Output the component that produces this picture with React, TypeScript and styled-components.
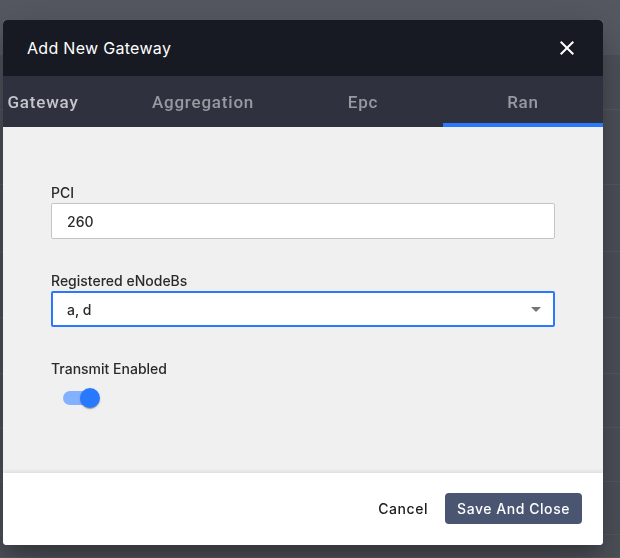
import React from 'react';
import styled, { createGlobalStyle } from 'styled-components';

const GlobalStyle = createGlobalStyle`
  html, body {
    margin: 0;
    padding: 0;
    background: #4e5159;
  }
  * {
    box-sizing: border-box;
  }
`;

const Page = styled.div`
  width: 620px;
  height: 558px;
  overflow: hidden;
  display: flex;
  flex-direction: column;
  background: #4e5159;
`;

const PageRow = styled.div<{ $h: number; $top?: boolean }>`
  flex: 0 0 ${(p) => p.$h}px;
  border-bottom: 1px solid #575a62;
  background: ${(p) => (p.$top ? '#565962' : 'transparent')};
`;

const Dialog = styled.div`
  position: fixed;
  left: 3px;
  top: 20px;
  width: 600px;
  border-radius: 4px;
  overflow: hidden;
  background: #fff;
  box-shadow: 0 11px 15px -7px rgba(0, 0, 0, 0.2), 0 24px 38px 3px rgba(0, 0, 0, 0.14),
    0 9px 46px 8px rgba(0, 0, 0, 0.12);
  font-family: Inter, 'Noto Sans', sans-serif;
`;

const Header = styled.div`
  height: 56px;
  background: #171a23;
  display: flex;
  align-items: center;
  justify-content: space-between;
  padding: 0 24px 0 24px;
`;

const Title = styled.h2`
  margin: 0;
  color: #fff;
  font-size: 16px;
  font-weight: 400;
  letter-spacing: 0.3px;
`;

const CloseButton = styled.button`
  border: 0;
  background: none;
  padding: 0;
  width: 24px;
  height: 24px;
  display: flex;
  align-items: center;
  justify-content: center;
  cursor: pointer;
  color: #fff;
`;

const TabBar = styled.div`
  height: 51px;
  background: #2f323e;
  display: flex;
  justify-content: flex-end;
  overflow: hidden;
`;

const Tab = styled.button<{ $active?: boolean; $light?: boolean }>`
  flex: 0 0 160px;
  height: 51px;
  border: 0;
  background: none;
  padding: 5px 0 0;
  font-family: Roboto, 'Liberation Sans', sans-serif;
  font-size: 17px;
  font-weight: 500;
  letter-spacing: 0.8px;
  color: ${(p) => (p.$light ? '#c3c5ca' : '#979aa1')};
  border-bottom: 4px solid ${(p) => (p.$active ? '#2979ff' : 'transparent')};
  cursor: pointer;
`;

const Content = styled.div`
  background: #f0f0f0;
  padding: 56px 48px 56px;
  display: flex;
  flex-direction: column;
  gap: 32px;
`;

const Field = styled.div`
  display: flex;
  flex-direction: column;
`;

const Label = styled.label`
  font-size: 14px;
  line-height: 20px;
  font-weight: 500;
  color: #2a2a2a;
`;

const TextInput = styled.input`
  height: 36px;
  width: 100%;
  border: 1px solid #c4c4c4;
  border-radius: 2px;
  background: #fff;
  padding: 0 15px;
  font-family: Inter, 'Noto Sans', sans-serif;
  font-size: 14px;
  font-weight: 500;
  color: #2b2b2b;
  outline: none;
`;

const SelectBox = styled.div`
  position: relative;
  height: 36px;
  border: 2px solid #2979ff;
  border-radius: 2px;
  background: #fff;
  padding: 0 14px;
  display: flex;
  align-items: center;
  font-size: 14px;
  font-weight: 500;
  color: #2b2b2b;
`;

const ArrowIcon = styled.svg`
  position: absolute;
  right: 5px;
  top: 4px;
  width: 24px;
  height: 24px;
  fill: #757575;
`;

const SwitchRoot = styled.span`
  width: 58px;
  height: 38px;
  padding: 12px;
  display: inline-flex;
  position: relative;
`;

const SwitchTrack = styled.span<{ $on: boolean }>`
  width: 100%;
  height: 100%;
  border-radius: 7px;
  background: ${(p) => (p.$on ? '#82b1ff' : '#9e9e9e')};
`;

const SwitchThumb = styled.span<{ $on: boolean }>`
  position: absolute;
  top: 9px;
  left: ${(p) => (p.$on ? '29px' : '9px')};
  width: 20px;
  height: 20px;
  border-radius: 50%;
  background: ${(p) => (p.$on ? '#2979ff' : '#fafafa')};
  box-shadow: 0 2px 1px -1px rgba(0, 0, 0, 0.2), 0 1px 1px 0 rgba(0, 0, 0, 0.14),
    0 1px 3px 0 rgba(0, 0, 0, 0.12);
`;

const Footer = styled.div`
  height: 72px;
  background: #fff;
  display: flex;
  align-items: center;
  justify-content: flex-end;
  gap: 9px;
  padding: 0 21px 2px 0;
  box-shadow: 0 -1px 4px rgba(0, 0, 0, 0.1);
  position: relative;
`;

const Button = styled.button<{ $primary?: boolean }>`
  height: 31px;
  border: 0;
  border-radius: 4px;
  padding: 0 ${(p) => (p.$primary ? '12px' : '8px')};
  font-family: Inter, 'Noto Sans', sans-serif;
  font-size: 14px;
  font-weight: 500;
  letter-spacing: 0.55px;
  background: ${(p) => (p.$primary ? '#4a5572' : 'transparent')};
  color: ${(p) => (p.$primary ? '#fff' : '#1c1c1c')};
  cursor: pointer;
`;

const rows = [
  { h: 55, top: true },
  { h: 55 },
  { h: 75 },
  { h: 67 },
  { h: 66 },
  { h: 56 },
  { h: 54 },
  { h: 54 },
  { h: 53 },
  { h: 23 },
];

const tabs = ['Gateway', 'Aggregation', 'Epc', 'Ran'];

export default function App() {
  const [transmit, setTransmit] = React.useState(true);
  const [pci, setPci] = React.useState('260');

  return (
    <>
      <GlobalStyle />
      <Page>
        {rows.map((r, i) => (
          <PageRow key={i} $h={r.h} $top={r.top} />
        ))}
      </Page>
      <Dialog>
        <Header>
          <Title>Add New Gateway</Title>
          <CloseButton aria-label="close">
            <svg width="24" height="24" viewBox="0 0 24 24" fill="currentColor">
              <path d="M19 6.41 17.59 5 12 10.59 6.41 5 5 6.41 10.59 12 5 17.59 6.41 19 12 13.41 17.59 19 19 17.59 13.41 12z" />
            </svg>
          </CloseButton>
        </Header>
        <TabBar>
          {tabs.map((t, i) => (
            <Tab key={t} $active={t === 'Ran'} $light={i === 0}>
              {t}
            </Tab>
          ))}
        </TabBar>
        <Content>
          <Field>
            <Label>PCI</Label>
            <TextInput value={pci} onChange={(e) => setPci(e.target.value)} />
          </Field>
          <Field>
            <Label>Registered eNodeBs</Label>
            <SelectBox>
              a, d
              <ArrowIcon viewBox="0 0 24 24">
                <path d="M7 10l5 5 5-5z" />
              </ArrowIcon>
            </SelectBox>
          </Field>
          <Field>
            <Label>Transmit Enabled</Label>
            <div>
              <SwitchRoot onClick={() => setTransmit(!transmit)}>
                <SwitchTrack $on={transmit} />
                <SwitchThumb $on={transmit} />
              </SwitchRoot>
            </div>
          </Field>
        </Content>
        <Footer>
          <Button>Cancel</Button>
          <Button $primary>Save And Close</Button>
        </Footer>
      </Dialog>
    </>
  );
}
